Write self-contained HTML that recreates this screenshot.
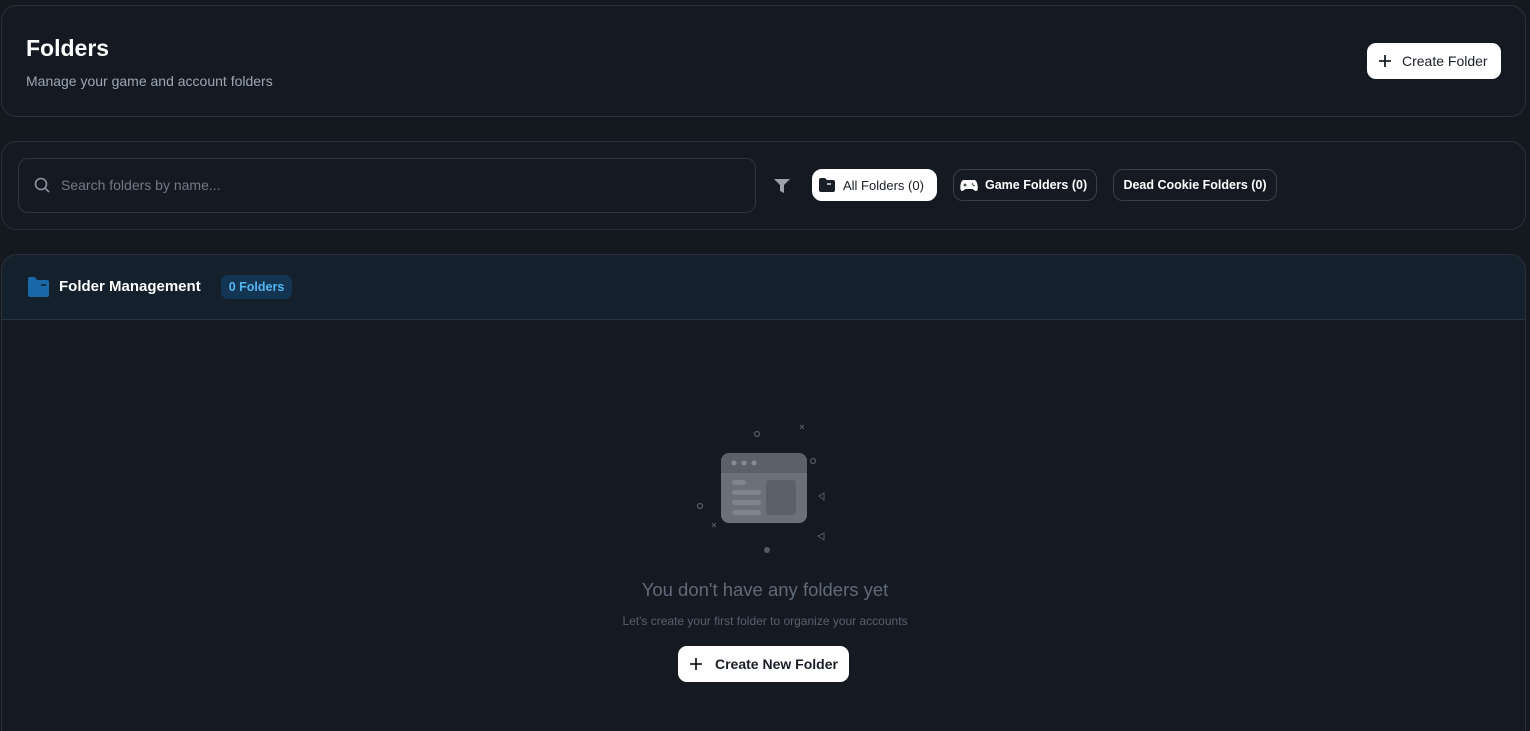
<!DOCTYPE html>
<html><head><meta charset="utf-8"><style>
*{box-sizing:border-box;margin:0;padding:0}
html,body{width:1530px;height:731px;overflow:hidden}
body{background:#141920;font-family:"Liberation Sans",sans-serif;color:#fff;position:relative}
.card{position:absolute;left:1px;width:1525px;border:1px solid #2a3039;border-radius:16px;background:#151a22}
.btn{position:absolute;background:#fff;color:#1a1f27;border-radius:9px;display:flex;align-items:center;font-size:14px}
.pill{position:absolute;top:169px;height:32px;border:1px solid #3a404a;border-radius:10px;display:flex;align-items:center;font-size:13px;color:#fff}
</style></head><body>
<div class="card" style="top:5px;height:112px">
  <div style="position:absolute;left:24px;top:29px;font-size:23px;font-weight:bold">Folders</div>
  <div style="position:absolute;left:24px;top:67px;font-size:14px;color:#9aa6b5">Manage your game and account folders</div>
  <div class="btn" style="left:1365px;top:37px;width:134px;height:36px;padding-left:11px">
    <svg width="14" height="14" viewBox="0 0 14 14"><path d="M7 1v12M1 7h12" stroke="#1a1f27" stroke-width="1.8"/></svg>
    <span style="margin-left:10px">Create Folder</span></div>
</div>
<div class="card" style="top:141px;height:89px">
  <div style="position:absolute;left:16px;top:16px;width:738px;height:55px;border:1px solid #2e343e;border-radius:10px">
    <svg style="position:absolute;left:15px;top:18px" width="17" height="17" viewBox="0 0 17 17"><circle cx="7" cy="7" r="5.5" stroke="#8a94a2" stroke-width="1.6" fill="none"/><path d="M11 11l4 4" stroke="#8a94a2" stroke-width="1.6"/></svg>
    <span style="position:absolute;left:42px;top:18px;font-size:14px;color:#6f7a88">Search folders by name...</span>
  </div>
  <svg style="position:absolute;left:771px;top:36px" width="18" height="16" viewBox="0 0 18 16"><path d="M1 1h16l-6 6v8l-4-2V7z" fill="#9aa3ae"/></svg>
</div>
<div class="pill" style="left:812px;width:125px;background:#fff;color:#1a1f27;border-color:#fff;padding-left:5px">
  <svg width="18" height="16" viewBox="0 0 18 16"><path d="M1 3a2 2 0 0 1 2-2h4l2 2h6a2 2 0 0 1 2 2v8a2 2 0 0 1-2 2H3a2 2 0 0 1-2-2z" fill="#1a1f27"/><path d="M9 7h4" stroke="#fff" stroke-width="1.3"/></svg>
  <span style="margin-left:7px">All Folders (0)</span></div>
<div class="pill" style="left:953px;width:144px;padding-left:6px">
  <svg width="18" height="13" viewBox="0 0 18 13"><path d="M4 1h10c2 0 3 2 3.5 5S18 12 16 12c-1.5 0-2.5-2-4-2H6c-1.5 0-2.5 2-4 2S0 9 .5 6 2 1 4 1z" fill="#fff"/><path d="M3.5 6h3M5 4.5v3" stroke="#151a22" stroke-width="1"/><circle cx="12.5" cy="5" r=".8" fill="#151a22"/><circle cx="14" cy="6.5" r=".8" fill="#151a22"/></svg>
  <span style="margin-left:7px;font-weight:bold;font-size:12.5px">Game Folders (0)</span></div>
<div class="pill" style="left:1113px;width:164px;justify-content:center;font-weight:bold;font-size:12.5px">Dead Cookie Folders (0)</div>
<div class="card" style="top:254px;height:500px;overflow:hidden">
  <div style="height:65px;background:#14202b;border-bottom:1px solid #273240;position:relative">
    <svg style="position:absolute;left:26px;top:22px" width="21" height="20" viewBox="0 0 21 20"><path d="M0 2a2 2 0 0 1 2-2h5l2 3h10a2 2 0 0 1 2 2v13a2 2 0 0 1-2 2H2a2 2 0 0 1-2-2z" fill="#1a68a8"/><path d="M13 8h5" stroke="#14202b" stroke-width="1.4"/></svg>
    <span style="position:absolute;left:57px;top:23px;font-size:15px;font-weight:bold">Folder Management</span>
    <span style="position:absolute;left:219px;top:20px;height:24px;width:71px;background:#133552;border-radius:7px;color:#55b6f0;font-size:12.5px;font-weight:bold;text-align:center;line-height:24px">0 Folders</span>
  </div>
</div>
<svg style="position:absolute;left:680px;top:410px" width="170" height="160" viewBox="0 0 170 160">
  <circle cx="77" cy="24" r="2.5" stroke="#525965" stroke-width="1.3" fill="none"/>
  <circle cx="133" cy="51" r="2.5" stroke="#525965" stroke-width="1.3" fill="none"/>
  <circle cx="20" cy="96" r="2.5" stroke="#525965" stroke-width="1.3" fill="none"/>
  <circle cx="87" cy="140" r="3" fill="#525965"/>
  <path d="M120 15l4 4M124 15l-4 4M32 113l4 4M36 113l-4 4" stroke="#525965" stroke-width="1.1"/>
  <path d="M139 86l5 -3v7zM138 126l6-3v7z" stroke="#525965" stroke-width="1" fill="none"/>
  <rect x="41" y="43" width="86" height="70" rx="8" fill="#6c7079"/>
  <path d="M49 43h70a8 8 0 0 1 8 8v12H41V51a8 8 0 0 1 8-8z" fill="#5b6069"/>
  <circle cx="54" cy="53" r="2.5" fill="#868a92"/><circle cx="64" cy="53" r="2.5" fill="#868a92"/><circle cx="74" cy="53" r="2.5" fill="#868a92"/>
  <rect x="52" y="70" width="14" height="5" rx="2.5" fill="#80848c"/>
  <rect x="52" y="80" width="29" height="5" rx="2.5" fill="#80848c"/>
  <rect x="52" y="90" width="29" height="5" rx="2.5" fill="#80848c"/>
  <rect x="52" y="100" width="29" height="5" rx="2.5" fill="#80848c"/>
  <rect x="86" y="70" width="30" height="35" rx="3" fill="#5b6069"/>
</svg>
<div style="position:absolute;left:0;width:1530px;top:579px;text-align:center;font-size:18.5px;color:#5f6a79">You don't have any folders yet</div>
<div style="position:absolute;left:0;width:1530px;top:614px;text-align:center;font-size:12px;color:#566170">Let's create your first folder to organize your accounts</div>
<div class="btn" style="left:678px;top:646px;width:171px;height:36px;padding-left:11px;font-weight:bold">
  <svg width="14" height="14" viewBox="0 0 14 14"><path d="M7 1v12M1 7h12" stroke="#1a1f27" stroke-width="1.8"/></svg>
  <span style="margin-left:12px">Create New Folder</span></div>
</body></html>
